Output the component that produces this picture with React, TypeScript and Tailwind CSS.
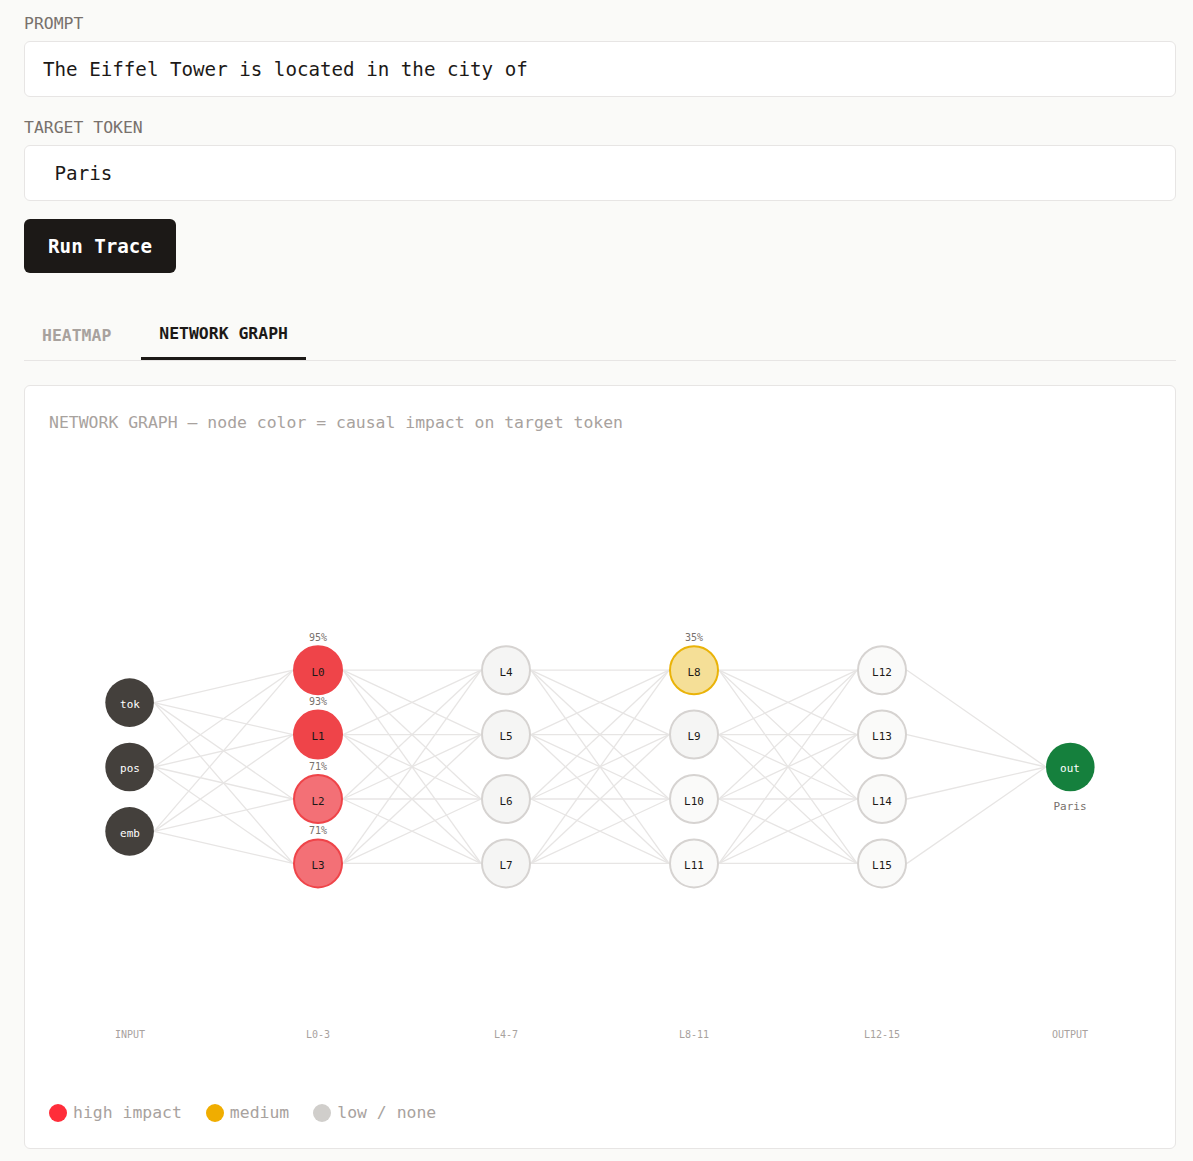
const MONO = "font-['DejaVu_Sans_Mono',monospace]";

type Node = { id: string; x: number; y: number; r: number; fill: string; stroke: string; text: string; pct?: string };

const LOW_A = '#f5f5f4';
const LOW_B = '#fafaf9';
const LOW_STROKE = '#d6d3d1';

// graph coords are relative to the svg's top left corner
const TOP = 445;
const LEFT = 49;
const ROWS = [670.2, 734.6, 799, 863.4];
const INPUT_ROWS = [702.6, 767, 831.4];

const col = (x: number, labels: string[], fills: string[], strokes: string[], pcts: (string | undefined)[]): Node[] =>
  labels.map((text, i) => ({
    id: text,
    x: x - LEFT,
    y: ROWS[i] - TOP,
    r: 25,
    fill: fills[i],
    stroke: strokes[i],
    text,
    pct: pcts[i],
  }));

const layers: Node[][] = [
  ['tok', 'pos', 'emb'].map((text, i) => ({
    id: text,
    x: 130 - LEFT,
    y: INPUT_ROWS[i] - TOP,
    r: 24,
    fill: '#44403c',
    stroke: 'none',
    text,
  })),
  col(
    318,
    ['L0', 'L1', 'L2', 'L3'],
    ['#ef4449', '#ef4449', '#f37076', '#f37076'],
    ['#ef4449', '#ef4449', '#ef4449', '#ef4449'],
    ['95%', '93%', '71%', '71%'],
  ),
  col(506, ['L4', 'L5', 'L6', 'L7'], [LOW_A, LOW_A, LOW_A, LOW_A], Array(4).fill(LOW_STROKE), []),
  col(
    694,
    ['L8', 'L9', 'L10', 'L11'],
    ['#f5df97', LOW_A, LOW_B, LOW_B],
    ['#eab308', LOW_STROKE, LOW_STROKE, LOW_STROKE],
    ['35%'],
  ),
  col(882, ['L12', 'L13', 'L14', 'L15'], Array(4).fill(LOW_B), Array(4).fill(LOW_STROKE), []),
  [{ id: 'out', x: 1070 - LEFT, y: 767 - TOP, r: 24, fill: '#15803d', stroke: 'none', text: 'out' }],
];

const COLUMN_LABELS = ['INPUT', 'L0-3', 'L4-7', 'L8-11', 'L12-15', 'OUTPUT'];

function Graph() {
  const edges = layers.slice(0, -1).flatMap((layer, i) =>
    layer.flatMap((a) => layers[i + 1].map((b) => ({ key: a.id + b.id, a, b }))),
  );

  return (
    <svg width="1102" height="645" viewBox="0 0 1102 645" className="block">
      {edges.map(({ key, a, b }) => (
        <line key={key} x1={a.x + a.r} y1={a.y} x2={b.x - b.r} y2={b.y} stroke="#e7e5e4" strokeWidth="1.3" />
      ))}
      {layers.flat().map((n) => {
        const dark = n.stroke === 'none';
        const cx = n.id === 'out' ? n.x + 0.3 : dark ? n.x - 0.4 : n.x;
        return (
          <g key={n.id}>
            <circle cx={cx} cy={n.y} r={dark ? 24.3 : 24} fill={n.fill} stroke={n.stroke} strokeWidth="2" />
            <text
              x={n.x}
              y={dark ? n.y + 5.2 : n.y + 5.5}
              textAnchor="middle"
              fontSize="10.96"
              fill={dark ? '#ffffff' : '#1c1917'}
              fontFamily="'DejaVu Sans Mono', monospace"
            >
              {n.text}
            </text>
            {n.pct && (
              <text
                x={n.x}
                y={n.y - 29.4}
                textAnchor="middle"
                fontSize="10"
                fill="#78716c"
                fontFamily="'DejaVu Sans Mono', monospace"
              >
                {n.pct}
              </text>
            )}
          </g>
        );
      })}
      <text
        x={1070 - LEFT}
        y={810 - TOP}
        textAnchor="middle"
        fontSize="10.96"
        fill="#78716c"
        fontFamily="'DejaVu Sans Mono', monospace"
      >
        Paris
      </text>
      {COLUMN_LABELS.map((label, i) => (
        <text
          key={label}
          x={130 - LEFT + i * 188}
          y={1038 - TOP}
          textAnchor="middle"
          fontSize="10"
          fill="#a8a29e"
          fontFamily="'DejaVu Sans Mono', monospace"
        >
          {label}
        </text>
      ))}
    </svg>
  );
}

function Field({ label, value }: { label: string; value: string }) {
  return (
    <div>
      <label className="block text-[16.45px] leading-[18px] text-[#78716c]">{label}</label>
      <input
        readOnly
        value={value}
        className={`mt-2 block h-14 w-full rounded-md border border-[#e7e5e4] bg-white px-[18px] text-[19.18px] text-[#1c1917] outline-none whitespace-pre ${MONO}`}
      />
    </div>
  );
}

export default function App() {
  return (
    <div className={`min-h-[1161px] bg-[#fafaf8] pl-6 pr-[17px] pt-[15px] ${MONO}`}>
      <div className="flex flex-col gap-[22px]">
        <Field label="PROMPT" value="The Eiffel Tower is located in the city of" />
        <Field label="TARGET TOKEN" value=" Paris" />
      </div>

      <button className="mt-[18px] block h-[54px] w-[152px] rounded-md bg-[#1c1917] pt-[2px] text-[19.18px] font-bold text-white">
        Run Trace
      </button>

      <div className="mt-[36px] flex h-[52px] items-end gap-3 border-b border-[#e7e5e4]">
        <div className="flex h-full items-center px-[18px] pt-[4px] text-[16.45px] font-bold text-[#a8a29e]">HEATMAP</div>
        <div className="flex h-[51px] items-center border-b-[3px] border-[#1c1917] px-[18px] pt-[2px] text-[16.45px] font-bold text-[#1c1917]">
          NETWORK GRAPH
        </div>
      </div>

      <section className="mt-6 h-[764px] rounded-md border border-[#e7e5e4] bg-white px-6">
        <p className="pt-[27px] text-[16.45px] leading-5 text-[#a8a29e]">
          NETWORK GRAPH — node color = causal impact on target token
        </p>
        <div className="mt-3">
          <Graph />
        </div>
        <div className="mt-[12px] flex items-center text-[16.45px] leading-5 text-[#a8a29e]">
          <span className="mr-[6px] h-[18px] w-[18px] rounded-full bg-[#ff2d3a]" />
          <span className="mr-[24px] pt-[1px]">high impact</span>
          <span className="mr-[6px] h-[18px] w-[18px] rounded-full bg-[#f0ad00]" />
          <span className="mr-[24px] pt-[1px]">medium</span>
          <span className="mr-[6px] h-[18px] w-[18px] rounded-full bg-[#d0cecb]" />
          <span className="pt-[1px]">low / none</span>
        </div>
      </section>
    </div>
  );
}
